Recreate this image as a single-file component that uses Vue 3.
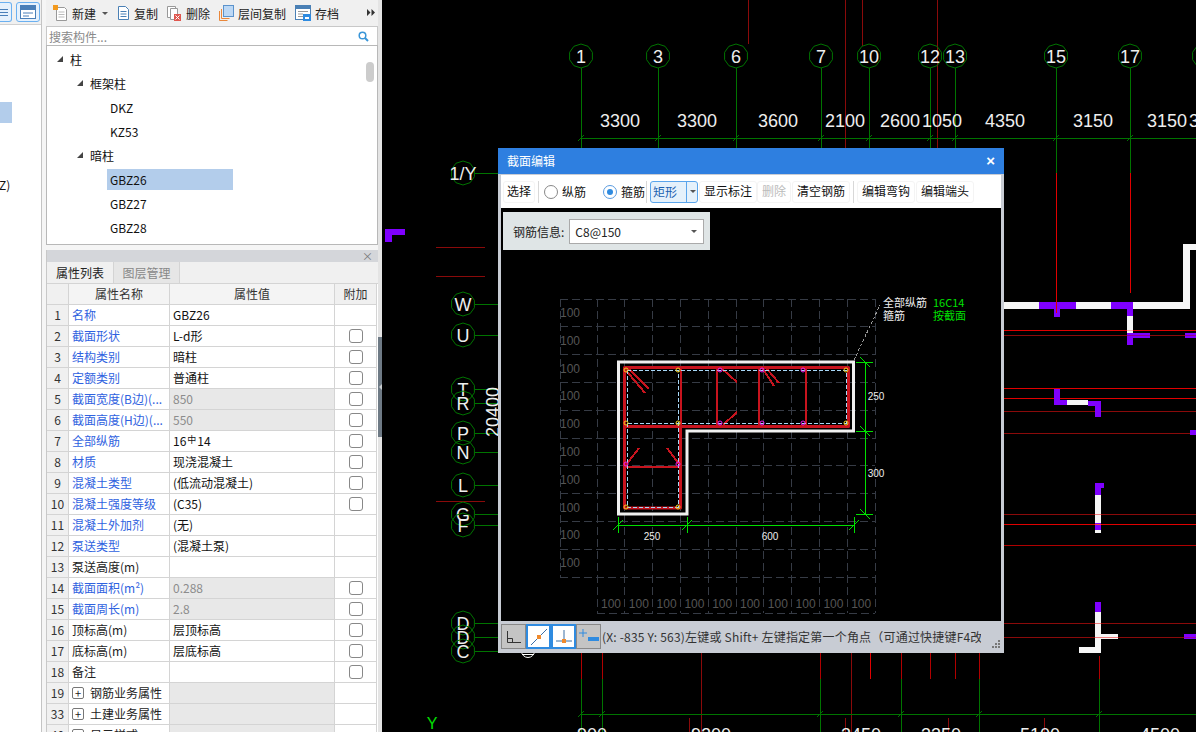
<script setup>
const treeRows = [
  { label: '柱', level: 0, arrow: true },
  { label: '框架柱', level: 1, arrow: true },
  { label: 'DKZ', level: 2 },
  { label: 'KZ53', level: 2 },
  { label: '暗柱', level: 1, arrow: true },
  { label: 'GBZ26', level: 2, active: true },
  { label: 'GBZ27', level: 2 },
  { label: 'GBZ28', level: 2 }
]

const props = [
  { no: 1, name: '名称', value: 'GBZ26', link: true },
  { no: 2, name: '截面形状', value: 'L-d形', link: true, check: true },
  { no: 3, name: '结构类别', value: '暗柱', link: true, check: true },
  { no: 4, name: '定额类别', value: '普通柱', link: true, check: true },
  { no: 5, name: '截面宽度(B边)(...', value: '850', link: true, check: true, off: true },
  { no: 6, name: '截面高度(H边)(...', value: '550', link: true, check: true, off: true },
  { no: 7, name: '全部纵筋', value: '16', rebar: '14', link: true, check: true },
  { no: 8, name: '材质', value: '现浇混凝土', link: true, check: true },
  { no: 9, name: '混凝土类型', value: '(低流动混凝土)', link: true, check: true },
  { no: 10, name: '混凝土强度等级', value: '(C35)', link: true, check: true },
  { no: 11, name: '混凝土外加剂', value: '(无)', link: true },
  { no: 12, name: '泵送类型', value: '(混凝土泵)', link: true },
  { no: 13, name: '泵送高度(m)', value: '' },
  { no: 14, name: '截面面积(m²)', value: '0.288', link: true, check: true, off: true },
  { no: 15, name: '截面周长(m)', value: '2.8', link: true, check: true, off: true },
  { no: 16, name: '顶标高(m)', value: '层顶标高', check: true },
  { no: 17, name: '底标高(m)', value: '层底标高', check: true },
  { no: 18, name: '备注', value: '', check: true },
  { no: 19, name: '钢筋业务属性', group: true, off: true },
  { no: 33, name: '土建业务属性', group: true, off: true },
  { no: 40, name: '显示样式', group: true, off: true }
]

const dark = '#8a0a0a'
const bright = '#e00000'
const green = '#007400'

// 轴网
const topAxes = [['1', 581], ['3', 658], ['6', 736], ['7', 821], ['10', 869], ['12', 930], ['13', 955], ['15', 1056], ['17', 1130]]
const topDims = [['3300', 620], ['3300', 697], ['3600', 778], ['2100', 845], ['2600', 900], ['1050', 942], ['4350', 1005], ['3150', 1093], ['3150', 1167]]
const leftAxes = [['1/Y', 173], ['W', 304], ['U', 335], ['T', 389], ['R', 403], ['P', 433], ['N', 452], ['L', 485], ['G', 514], ['F', 525], ['D', 623], ['D', 637], ['C', 651]]
const bottomDims = [['900', 592], ['9200', 711], ['3450', 861], ['3350', 941], ['5100', 1040], ['4500', 1160]]

const octagon = (cx, cy, r = 12) => {
  const pts = []
  for (let i = 0; i < 10; i++) {
    const a = (Math.PI * 2 * i) / 10 - Math.PI / 2
    pts.push((cx + r * Math.cos(a)).toFixed(1) + ',' + (cy + r * Math.sin(a)).toFixed(1))
  }
  return pts.join(' ')
}

const lines = [
  [748, 0, 748, 44, dark], [845, 0, 845, 148, dark], [862, 0, 862, 46, dark], [937, 0, 937, 148, dark],
  [1056, 173, 1056, 313, bright], [1130, 173, 1130, 293, bright],
  [436, 247, 485, 247, dark], [436, 276, 485, 276, dark], [436, 501, 485, 501, dark],
  [1004, 330, 1196, 330, bright], [1004, 335, 1196, 335, dark], [1004, 388, 1196, 388, bright],
  [1004, 398, 1196, 398, bright], [1004, 411, 1196, 411, dark], [1004, 433, 1196, 433, dark],
  [1004, 514, 1196, 514, dark], [1004, 524, 1196, 524, bright], [1004, 545, 1196, 545, '#b00000'],
  [1004, 623, 1196, 623, dark], [1004, 637, 1196, 637, dark],
  [581, 653, 581, 679, '#b00000'], [602, 653, 602, 679, '#b00000'], [701, 653, 701, 732, dark],
  [820, 653, 820, 679, '#b00000'], [851, 653, 851, 732, dark], [870, 653, 870, 679, bright],
  [901, 653, 901, 679, '#b00000'], [930, 653, 930, 679, '#b00000'], [955, 653, 955, 679, '#b00000'],
  [979, 653, 979, 679, '#b00000'], [1099, 656, 1099, 679, '#b00000'],
  [689, 718, 689, 732, dark], [845, 718, 845, 732, dark], [948, 718, 948, 732, dark], [1044, 718, 1044, 732, dark]
]

const bottomAxes = [581, 602, 820, 901, 979, 1099]

// 墙和暗柱的色块: x, y, w, h, 颜色
const white = '#f6f6f6'
const purple = '#7f00ff'
const blocks = [
  [385, 229, 20, 6, purple], [385, 229, 7, 13, purple],
  [1004, 302, 186, 7, white], [1183, 244, 7, 65, white], [1183, 244, 13, 6, white],
  [1039, 302, 37, 7, purple], [1054, 309, 6, 8, purple], [1111, 302, 22, 7, purple], [1127, 309, 6, 7, purple],
  [1127, 316, 6, 17, white], [1127, 333, 6, 12, purple], [1127, 333, 23, 5, purple], [1185, 333, 11, 5, purple],
  [1054, 389, 6, 16, purple], [1054, 400, 13, 5, purple], [1067, 400, 21, 5, white], [1088, 401, 13, 5, purple], [1095, 401, 6, 16, purple],
  [1190, 430, 6, 5, purple],
  [1095, 483, 9, 5, purple], [1095, 483, 6, 12, purple], [1095, 495, 6, 28, white], [1095, 523, 6, 7, purple], [1095, 530, 6, 3, white],
  [1095, 602, 6, 10, purple], [1095, 612, 6, 41, white], [1101, 634, 17, 5, white], [1079, 647, 22, 6, white], [1184, 634, 12, 5, purple],
  // 红线压在墙上的地方
  [1056, 302, 1, 11, bright], [1127, 330, 6, 1, '#ffb0b0'], [1127, 335, 23, 1, '#900090'], [1185, 335, 11, 1, '#900090'],
  [1095, 514, 6, 1, '#f08080'], [1095, 524, 6, 1, '#ff4040'], [1095, 623, 6, 1, '#f08080'], [1095, 637, 23, 1, '#f08080'], [1184, 637, 12, 1, '#a000a0']
]

// 截面图
const gridX = Array.from({ length: 11 }, (_, i) => 597 + i * 27.8)
const gridY = Array.from({ length: 11 }, (_, i) => 299 + i * 27.8)
const leftLabels = gridY.slice(0, 10).map((y) => y + 18)
const bottomLabels = gridX.slice(0, 10).map((x) => x + 14)
const thinRed = [
  [680.5, 367, 680.5, 426], [717, 367, 717, 426], [759, 367, 759, 426], [806, 367, 806, 426],
  [624, 368, 645, 393], [628, 368, 649, 389], [722, 369, 737, 382], [723, 425, 737, 412],
  [763, 369, 774, 386], [767, 369, 779, 383], [624, 467, 681, 467], [626, 465, 639, 448], [667, 448, 679, 464]
]
const yellowDots = [[626, 370], [678, 370], [846, 370], [626, 423], [678, 423], [846, 423], [626, 507], [678, 507]]
const pinkDots = [[720, 370], [762, 370], [803, 370], [720, 423], [762, 423], [803, 423], [626, 464], [678, 464]]
const vTicks = [362, 431, 514]
const hTicks = [618, 687, 854]
</script>

<template>
  <div class="app">
    <aside class="side-strip">
      <div class="strip-top">
        <span class="strip-btn first"><i></i><i></i><i></i></span>
        <span class="strip-btn second">
          <svg width="16" height="14" viewBox="0 0 16 14"><rect x="0.5" y="0.5" width="15" height="13" fill="#fff" stroke="#4a7fb8" /><rect x="1" y="1" width="14" height="4" fill="#4a7fb8" /><path d="M3 8h10M3 11h6" stroke="#4a7fb8" /></svg>
        </span>
      </div>
      <div class="strip-hl"></div>
      <div class="strip-text">Z)</div>
    </aside>

    <main class="middle">
      <section class="tree-panel">
        <div class="tool-row">
          <span class="tool">
            <svg width="15" height="16" viewBox="0 0 15 16"><path d="M3.500 2.500h8l2 2v11h-10z" fill="#fff" stroke="#999" /><path d="M5.500 7h6M5.500 9.500h6M5.500 12h6" stroke="#bbb" /><rect x="0" y="0" width="5" height="5" fill="#f39a1e" /></svg>
            新建<em class="caret"></em>
          </span>
          <span class="tool">
            <svg width="13" height="16" viewBox="0 0 13 16"><path d="M1.500 1.500h7l3 3v10h-10z" fill="#fff" stroke="#4a80b5" /><path d="M3.500 6.500h6M3.500 9h6M3.500 11.500h6" stroke="#4a80b5" /></svg>
            复制
          </span>
          <span class="tool">
            <svg width="15" height="16" viewBox="0 0 15 16"><path d="M0.500 1.500h8v11h-8z" fill="#fff" stroke="#999" /><path d="M3.500 3.500h7v11h-7z" fill="#fff" stroke="#999" /><rect x="7" y="9" width="7" height="7" fill="#e0574f" /><path d="M8.500 10.500l4 4m0-4l-4 4" stroke="#fff" /></svg>
            删除
          </span>
          <span class="tool">
            <svg width="15" height="16" viewBox="0 0 15 16"><path d="M0.500 6v9.500h8M2.500 4v9.500h8" fill="none" stroke="#e9873a" /><rect x="4.500" y="0.500" width="10" height="11" fill="#bcd8f5" stroke="#5b93cc" /></svg>
            层间复制
          </span>
          <span class="tool">
            <svg width="16" height="16" viewBox="0 0 16 16"><rect x="0.500" y="0.500" width="15" height="14" fill="#fff" stroke="#4a80b5" /><rect x="1" y="1" width="14" height="3" fill="#4a80b5" /><path d="M3 6.500h10M3 9h5M3 11.500h5" stroke="#999" /><rect x="8" y="9" width="8" height="7" fill="#2f8be0" /><rect x="10" y="12" width="4" height="2" fill="#fff" /></svg>
            存档
          </span>
          <svg class="more" width="8" height="7" viewBox="0 0 8 7"><path d="M0 0l3.500 3.500L0 7zM4.500 0L8 3.500 4.500 7z" fill="#333" /></svg>
        </div>
        <div class="search-row">
          <span>搜索构件...</span>
          <svg width="11" height="11" viewBox="0 0 11 11"><circle cx="4.500" cy="4.500" r="3.300" fill="none" stroke="#3a96d8" stroke-width="1.500" /><path d="M7 7l3 3" stroke="#3a96d8" stroke-width="2" /></svg>
        </div>
        <div class="tree">
          <div v-for="row in treeRows" :key="row.label" class="tree-row" :class="'lv' + row.level">
            <em v-if="row.arrow" class="tree-arrow"></em>
            <span class="tree-label" :class="{ active: row.active }">{{ row.label }}</span>
          </div>
          <div class="tree-thumb"></div>
        </div>
      </section>

      <section class="prop-panel">
        <div class="prop-head"><span>×</span></div>
        <div class="tabs">
          <span class="tab on">属性列表</span>
          <span class="tab">图层管理</span>
        </div>
        <div class="prop-row title">
          <div class="c-no"></div>
          <div class="c-name">属性名称</div>
          <div class="c-val">属性值</div>
          <div class="c-add">附加</div>
        </div>
        <div v-for="p in props" :key="p.no" class="prop-row">
          <div class="c-no">{{ p.no }}</div>
          <div class="c-name" :class="{ link: p.link }">
            <em v-if="p.group" class="plus">+</em>{{ p.name }}
          </div>
          <div class="c-val" :class="{ off: p.off }">{{ p.value }}<template v-if="p.rebar"><sup class="rebar">中</sup>{{ p.rebar }}</template></div>
          <div class="c-add"><em v-if="p.check" class="check"></em></div>
        </div>
      </section>
    </main>

    <div class="splitter"><div class="handle"></div></div>

    <div class="canvas">
      <svg class="cad" width="814" height="732" viewBox="382 0 814 732">
        <line v-for="(l, i) in lines" :key="'l' + i" :x1="l[0]" :y1="l[1]" :x2="l[2]" :y2="l[3]" :stroke="l[4]" />
        <rect v-for="(b, i) in blocks" :key="'b' + i" :x="b[0]" :y="b[1]" :width="b[2]" :height="b[3]" :fill="b[4]" />

        <line x1="581" y1="138" x2="1196" y2="138" :stroke="green" />
        <line x1="581" y1="714" x2="1196" y2="714" :stroke="green" />
        <g v-for="a in topAxes" :key="'t' + a[1]">
          <line :x1="a[1]" y1="68" :x2="a[1]" :y2="a[1] === 1056 || a[1] === 1130 ? 173 : 148" :stroke="green" />
          <line :x1="a[1] - 3" y1="141" :x2="a[1] + 3" y2="135" :stroke="green" />
          <polygon :points="octagon(a[1], 56)" fill="none" :stroke="green" />
          <text :x="a[1]" y="63" class="cad-text" text-anchor="middle">{{ a[0] }}</text>
        </g>
        <polygon :points="octagon(1204, 56)" fill="none" :stroke="green" />
        <text v-for="d in topDims" :key="'d' + d[1]" :x="d[1]" y="127" class="cad-text" text-anchor="middle">{{ d[0] }}</text>
        <text x="1194" y="127" class="cad-text" text-anchor="middle">3</text>

        <g v-for="a in leftAxes" :key="'a' + a[1]">
          <line x1="475" :y1="a[1]" x2="499" :y2="a[1]" :stroke="green" />
          <polygon :points="octagon(463, a[1])" fill="none" :stroke="green" />
          <text x="463" :y="a[1] + 7" class="cad-text" text-anchor="middle">{{ a[0] }}</text>
        </g>
        <text class="cad-text" transform="translate(499 412) rotate(-90)" text-anchor="middle">20400</text>

        <g v-for="x in bottomAxes" :key="'v' + x">
          <line :x1="x" y1="679" :x2="x" y2="732" :stroke="green" />
          <line :x1="x - 3" y1="717" :x2="x + 3" y2="711" :stroke="green" />
        </g>
        <text v-for="d in bottomDims" :key="'bd' + d[1]" :x="d[1]" y="741" class="cad-text" text-anchor="middle">{{ d[0] }}</text>
        <circle cx="528" cy="651" r="6.500" fill="none" stroke="#fff" />
        <line x1="522" y1="654" x2="534" y2="654" stroke="#fff" />

        <text x="432" y="729" class="cad-y" text-anchor="middle">Y</text>
      </svg>

      <div class="dialog">
        <div class="dlg-title">
          <span>截面编辑</span>
          <span class="dlg-close">×</span>
        </div>
        <div class="dlg-tools">
          <span class="dbtn first">选择</span>
          <i class="dsep wide"></i>
          <span class="radio"></span><span class="rlabel one">纵筋</span>
          <span class="radio on"></span><span class="rlabel">箍筋</span>
          <i class="dsep tight"></i>
          <span class="combo"><b>矩形</b><em class="caret"></em></span>
          <span class="dbtn show">显示标注</span>
          <span class="dbtn grey">删除</span>
          <span class="dbtn">清空钢筋</span>
          <i class="dsep tight"></i>
          <span class="dbtn hook">编辑弯钩</span>
          <span class="dbtn">编辑端头</span>
        </div>
        <div class="dlg-body">
          <svg class="section" width="500" height="413" viewBox="501 208 500 413">
            <!-- 网格 -->
            <line v-for="x in gridX" :key="'gx' + x" :x1="x" y1="299" :x2="x" y2="613" class="grid" />
            <line v-for="y in gridY" :key="'gy' + y" x1="560" :y1="y" x2="875" :y2="y" class="grid" />
            <line x1="560" y1="299" x2="560" y2="577" class="grid" />
            <line x1="597" y1="613" x2="875" y2="613" class="grid" />
            <text v-for="y in leftLabels" :key="'ll' + y" x="560" :y="y" class="grid-text">100</text>
            <text v-for="x in bottomLabels" :key="'bl' + x" :x="x" y="608" class="grid-text" text-anchor="middle">100</text>

            <path d="M618.500 362H853.500V431H687V514H618.500Z" fill="none" stroke="#f0f0f0" stroke-width="3" />

            <path d="M624.500 367.500H848.500V426.500H624.500ZM624.500 426.500V508H680.500V426.500" fill="none" stroke="#c8141e" stroke-width="3" stroke-linejoin="round" />
            <line v-for="(l, i) in thinRed" :key="'r' + i" :x1="l[0]" :y1="l[1]" :x2="l[2]" :y2="l[3]" stroke="#c8141e" stroke-width="2" />
            <path d="M627 370H846V423H627ZM627 423V507H678V370" fill="none" stroke="#a8d8f8" stroke-dasharray="4 2" class="crisp" />
            <circle v-for="d in yellowDots" :key="'y' + d[0] + d[1]" :cx="d[0]" :cy="d[1]" r="2" fill="none" stroke="#f0d020" />
            <circle v-for="d in pinkDots" :key="'p' + d[0] + d[1]" :cx="d[0]" :cy="d[1]" r="2" fill="none" stroke="#f020f0" />

            <!-- 标注 -->
            <line x1="865" y1="362" x2="865" y2="514" class="dim" />
            <line x1="618" y1="525" x2="854" y2="525" class="dim" />
            <g v-for="y in vTicks" :key="'vt' + y">
              <line x1="856" :y1="y" x2="873" :y2="y" class="dim" />
              <line x1="860" :y1="y - 5" x2="870" :y2="y + 5" class="dim" />
            </g>
            <g v-for="x in hTicks" :key="'ht' + x">
              <line :x1="x" y1="517" :x2="x" y2="533" class="dim" />
              <line :x1="x - 5" y1="530" :x2="x + 5" y2="520" class="dim" />
            </g>
            <text x="876" y="400" class="dim-text" text-anchor="middle">250</text>
            <text x="876" y="477" class="dim-text" text-anchor="middle">300</text>
            <text x="652" y="540" class="dim-text" text-anchor="middle">250</text>
            <text x="770" y="540" class="dim-text" text-anchor="middle">600</text>

            <line x1="854" y1="360" x2="880" y2="305" stroke="#999" stroke-dasharray="3 2" />
            <text x="883" y="307" class="note">全部纵筋</text>
            <text x="883" y="320" class="note">箍筋</text>
            <text x="933" y="307" class="note g">16C14</text>
            <text x="933" y="320" class="note g">按截面</text>
          </svg>
          <div class="rebar-info">
            <span>钢筋信息:</span>
            <div class="rebar-select"><span>C8@150</span><em class="caret"></em></div>
          </div>
        </div>
        <div class="dlg-status">
          <span class="sbtn">
            <svg width="16" height="14" viewBox="0 0 16 14"><path d="M1.500 1v11.500H15M1.500 8.500h5v4" fill="none" stroke="#333" /></svg>
          </span>
          <span class="sbtn on">
            <svg width="18" height="18" viewBox="0 0 18 18"><path d="M1 17L17 1" stroke="#3b6ea5" /><rect x="7" y="7" width="4" height="4" fill="#f08a2c" /></svg>
          </span>
          <span class="sbtn on">
            <svg width="18" height="18" viewBox="0 0 18 18"><path d="M1 13H17M9 2V13" stroke="#3b6ea5" /><rect x="7" y="11" width="4" height="4" fill="#f08a2c" /></svg>
          </span>
          <span class="sbtn">
            <svg width="20" height="18" viewBox="0 0 20 18"><path d="M4 1v8M0 5h8" stroke="#2f8be0" /><rect x="9" y="9" width="11" height="4" fill="#2f8be0" /></svg>
          </span>
          <span class="status-text">(X: -835 Y: 563)左键或 Shift+ 左键指定第一个角点（可通过快捷键F4改变插入点）</span>
          <svg class="grip" width="10" height="10" viewBox="0 0 10 10"><path d="M7 1h2v2H7zM4 4h2v2H4zM7 4h2v2H7zM1 7h2v2H1zM4 7h2v2H4zM7 7h2v2H7z" fill="#777" /></svg>
        </div>
      </div>
    </div>
  </div>
</template>

<style scoped>
.app {
  width: 1196px; height: 732px; display: flex; overflow: hidden; background: #f5f5f5;
  font-family: "Noto Sans CJK SC", "Liberation Sans", sans-serif; font-size: 12px; color: #111;
}
em { font-style: normal; }

.side-strip { width: 41px; border-right: 1px solid #c4c4c4; background: #fff; position: relative; flex: none; }
.strip-top { height: 25px; background: #f0f0f0; border-bottom: 1px solid #d0d0d0; display: flex; gap: 4px; padding-top: 2px; box-sizing: border-box; }
.strip-btn { height: 20px; border: 1px solid #6bb0f0; border-radius: 3px; background: #e6f1fc; box-sizing: border-box; display: flex; align-items: center; justify-content: center; }
.strip-btn.first { width: 12px; border-left: 0; border-radius: 0 3px 3px 0; flex-direction: column; gap: 2px; align-items: flex-start; }
.strip-btn.first i { display: block; width: 8px; height: 1px; background: #4a7fb8; }
.strip-btn.second { width: 24px; }
.strip-hl { position: absolute; left: 0; top: 102px; width: 12px; height: 21px; background: #b3cdeb; }
.strip-text { position: absolute; left: -1px; top: 176px; }

.middle { width: 332px; margin-left: 4px; flex: none; display: flex; flex-direction: column; }

.tree-panel { height: 245px; display: flex; flex-direction: column; flex: none; }
.tool-row { height: 26px; background: #f0f0f0; display: flex; align-items: center; padding-left: 7px; position: relative; flex: none; color: #222; }
.tool { display: flex; align-items: center; gap: 4px; margin-right: 9px; white-space: nowrap; }
.tool .caret { margin-left: 2px; }
.more { position: absolute; left: 321px; top: 9px; }
.caret { display: inline-block; width: 0; height: 0; border-left: 3px solid transparent; border-right: 3px solid transparent; border-top: 3px solid #555; }
.search-row { height: 19px; background: #fff; border: 1px solid #c8c8c8; border-bottom: 0; display: flex; align-items: center; justify-content: space-between; padding: 0 8px 0 2px; color: #8a8a8a; flex: none; box-sizing: border-box; }
.tree { flex: 1; background: #fff; border: 1px solid #b8b8b8; position: relative; padding-top: 1px; box-sizing: border-box; }
.tree-row { height: 24px; display: flex; align-items: center; position: relative; }
.tree-label { line-height: 21px; padding: 0 3px; }
.lv0 .tree-label { margin-left: 20px; }
.lv1 .tree-label { margin-left: 40px; }
.lv2 .tree-label { margin-left: 60px; }
.tree-label.active { background: #b3cdeb; width: 120px; }
.tree-arrow { position: absolute; top: 9px; width: 0; height: 0; border-left: 6px solid transparent; border-bottom: 6px solid #444; }
.lv0 .tree-arrow { left: 10px; }
.lv1 .tree-arrow { left: 30px; }
.tree-thumb { position: absolute; right: 3px; top: 16px; width: 8px; height: 20px; background: #ccc; border-radius: 4px; }

.prop-panel { margin-top: 5px; flex: 1; background: #fff; border-left: 1px solid #c8c8c8; overflow: hidden; }
.prop-head { height: 12px; background: #d4d6da; text-align: right; padding-right: 5px; line-height: 12px; color: #777; font-size: 11px; }
.tabs { height: 22px; background: #f0f0f0; display: flex; border-bottom: 1px solid #d4d4d4; box-sizing: border-box; }
.tab { width: 65px; line-height: 21px; text-align: center; color: #888; background: #e6e6e6; border-right: 1px solid #d4d4d4; }
.tab.on { width: 66px; color: #222; background: #f0f0f0; }
.prop-row { display: grid; grid-template-columns: 22px 101px 165px 42px; height: 21px; line-height: 20px; width: 331px; }
.prop-row > div { border-right: 1px solid #d4d4d4; border-bottom: 1px solid #d4d4d4; box-sizing: border-box; white-space: nowrap; overflow: hidden; }
.c-no { background: #f0f0f0; text-align: center; color: #333; }
.c-name { padding-left: 3px; color: #222; }
.c-name.link { color: #2f62e0; }
.c-val { padding-left: 3px; }
.c-val.off { background: #e8e8e8; color: #8c8c8c; }
.c-add { display: flex; align-items: center; justify-content: center; }
.title > div { background: #f0f0f0; text-align: center; color: #333; padding: 0; }
.title .c-val, .title .c-name { background: #f4f4f4; }
.check { width: 14px; height: 14px; border: 1px solid #888; border-radius: 3px; box-sizing: border-box; background: #fff; }
.plus { display: inline-block; width: 12px; height: 12px; line-height: 10px; border: 1px solid #777; border-radius: 2px; text-align: center; margin-right: 6px; box-sizing: border-box; font-size: 11px; vertical-align: 0; }
.rebar { font-size: 9px; line-height: 0; vertical-align: 3px; margin: 0 1px; }

.splitter { width: 4px; background: #e4e4e4; flex: none; position: relative; }
.handle { position: absolute; left: 0; top: 337px; width: 4px; height: 100px; background: #6e7a85; }
.handle::after { content: ''; position: absolute; left: 1px; top: 47px; border-right: 3px solid #c8ccd0; border-top: 3px solid transparent; border-bottom: 3px solid transparent; }

.canvas { flex: 1; position: relative; background: #000; overflow: hidden; }
.cad { position: absolute; left: 0; top: 0; }
.cad line, .section line, .crisp { shape-rendering: crispEdges; }
.cad-text { fill: #eee; font-family: "Liberation Sans", sans-serif; font-size: 18px; }
.cad-y { fill: #00e000; font-family: "Liberation Sans", sans-serif; font-size: 16px; }

.dialog { position: absolute; left: 116px; top: 148px; width: 506px; height: 505px; background: #c8ccd4; display: flex; flex-direction: column; }
.dlg-title { height: 26px; background: #2e7fe0; color: #fff; display: flex; align-items: center; justify-content: space-between; padding: 0 9px 2px; flex: none; box-sizing: border-box; }
.dlg-close { font-size: 15px; line-height: 1; font-family: "Liberation Sans", sans-serif; font-weight: bold; }
.dlg-tools { height: 33px; margin: 1px 3px 0; background: #fff; display: flex; align-items: center; flex: none; }
.dbtn { border: 1px solid #f4f4f4; border-radius: 3px; padding: 0 4px; height: 20px; line-height: 18px; margin-right: 2px; white-space: nowrap; }
.dbtn.first { margin-left: 2px; padding: 0 3px; }
.dbtn.show { margin-right: 0; }
.dbtn.grey { color: #bbb; margin-right: 1px; }
.dbtn.hook { margin-right: 1px; }
.dsep { width: 1px; height: 22px; background: #d8d8d8; margin: 0 4px 0 1px; }
.dsep.wide { margin: 0 5px 0 1px; }
.dsep.tight { margin: 0 3px 0 1px; }
.radio { width: 14px; height: 14px; border-radius: 50%; border: 1px solid #888; box-sizing: border-box; background: #fff; position: relative; }
.radio.on { border-color: #5a9be0; }
.radio.on::after { content: ''; position: absolute; left: 3px; top: 3px; width: 6px; height: 6px; border-radius: 50%; background: #2f8be0; }
.rlabel { margin-left: 4px; }
.rlabel.one { margin-right: 17px; }
.combo { width: 48px; height: 22px; border: 1px solid #5aa5ec; border-radius: 3px; background: #e5f1fb; box-sizing: border-box; display: flex; align-items: center; margin-right: 1px; }
.combo b { font-weight: normal; width: 36px; padding-left: 2px; color: #1a5fb0; box-sizing: border-box; border-right: 1px solid #5aa5ec; line-height: 20px; }
.combo .caret { margin-left: 3px; }
.dlg-body { flex: 1; background: #000; margin: 0 3px; position: relative; }
.section { display: block; }
.grid { stroke: #363b45; stroke-dasharray: 8 4; }
.grid-text { fill: #555; font-family: "Liberation Sans", sans-serif; font-size: 12px; }
.dim { stroke: #00e000; }
.dim-text { fill: #eee; font-family: "Liberation Sans", sans-serif; font-size: 10px; }
.note { fill: #eee; font-size: 11px; }
.note.g { fill: #00e000; }
.rebar-info { position: absolute; left: 2px; top: 4px; width: 207px; height: 38px; background: #dfe5e6; display: flex; align-items: center; padding-left: 10px; gap: 5px; box-sizing: border-box; color: #222; }
.rebar-select { width: 135px; height: 25px; background: #fff; border: 1px solid #aaa; box-sizing: border-box; display: flex; align-items: center; justify-content: space-between; padding: 0 6px 0 5px; }
.dlg-status { height: 29px; padding-top: 3px; display: flex; align-items: flex-start; flex: none; padding-left: 3px; position: relative; color: #333; overflow: hidden; }
.sbtn { width: 25px; height: 25px; border: 1px solid #888; background: #c4c4c4; box-sizing: border-box; display: flex; align-items: center; justify-content: center; flex: none; }
.sbtn.on { background: #fff; border: 2px solid #2f8be0; }
.status-text { margin-left: 1px; line-height: 25px; width: 379px; overflow: hidden; white-space: nowrap; flex: none; letter-spacing: 0.2px; }
.grip { position: absolute; right: 3px; bottom: 4px; }
</style>

<style>
html, body { margin: 0; background: #000; }
</style>
